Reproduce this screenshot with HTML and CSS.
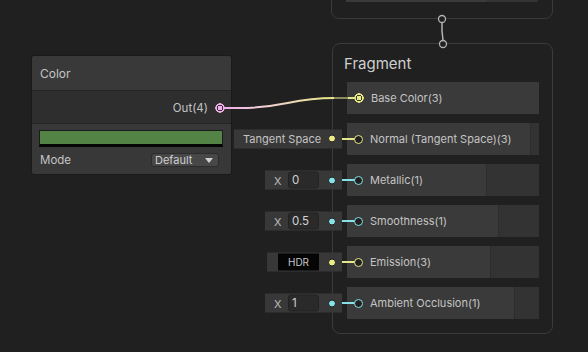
FILE: index.html
```html
<!DOCTYPE html>
<html>
<head>
<meta charset="utf-8">
<link rel="stylesheet" href="styles.css">
</head>
<body>
<div class="canvas">
  <div class="node node-top">
    <div class="top-bar"><div class="top-bar-main"></div><div class="top-bar-rest"></div></div>
  </div>

  <svg class="wires" width="588" height="352" viewBox="0 0 588 352">
    <defs>
      <linearGradient id="g1" gradientUnits="userSpaceOnUse" x1="226" y1="0" x2="330" y2="0">
        <stop offset="0" stop-color="#efaee6"/>
        <stop offset="0.35" stop-color="#f2cfd8"/>
        <stop offset="1" stop-color="#e6e68a"/>
      </linearGradient>
    </defs>
    <path d="M224 108 L240 108 C 285 108, 290 98, 334 98" fill="none" stroke="url(#g1)" stroke-width="2"/>
    <path d="M334 98 L348 98" stroke="#8a8a5e" stroke-width="2"/>
    <path d="M348 98 L356 98" stroke="#e6e68a" stroke-width="2"/>
    <circle cx="442" cy="19" r="3.5" fill="#202020" stroke="#b4b4b4" stroke-width="1.3"/>
    <path d="M442 22.5 L442 31 L443 40" fill="none" stroke="#b4b4b4" stroke-width="1.5"/>
    <circle cx="443" cy="44" r="3.5" fill="#202020" stroke="#b4b4b4" stroke-width="1.3"/>
  </svg>

  <div class="node node-color">
    <div class="color-header">Color</div>
    <div class="color-out">
      <span class="out-label">Out(4)</span>
      <span class="port-dot pink"></span>
    </div>
    <div class="color-body">
      <div class="swatch"></div>
      <div class="mode-row">
        <span class="mode-label">Mode</span>
        <div class="dropdown"><span>Default</span><span class="caret"></span></div>
      </div>
    </div>
  </div>

  <div class="node node-frag">
    <div class="frag-title">Fragment</div>
    <div class="slots">
      <div class="slot">
        <div class="slot-main" style="width:192px">
          <span class="port-dot yellow"></span>
          <span class="slot-label">Base Color(3)</span>
        </div>
      </div>

      <div class="slot">
        <div class="inbox inbox-text"><span>Tangent Space</span><span class="in-dot yellow"></span></div>
        <div class="wire wire-yellow"></div>
        <div class="slot-main" style="width:183px">
          <span class="port-ring yellow"></span>
          <span class="slot-label">Normal (Tangent Space)(3)</span>
        </div>
        <div class="slot-rest"></div>
      </div>

      <div class="slot">
        <div class="inbox inbox-x"><span class="x">X</span><span class="field">0</span><span class="in-dot cyan"></span></div>
        <div class="wire wire-cyan"></div>
        <div class="slot-main" style="width:139px">
          <span class="port-ring cyan"></span>
          <span class="slot-label">Metallic(1)</span>
        </div>
        <div class="slot-rest"></div>
      </div>

      <div class="slot">
        <div class="inbox inbox-x"><span class="x">X</span><span class="field">0.5</span><span class="in-dot cyan"></span></div>
        <div class="wire wire-cyan"></div>
        <div class="slot-main" style="width:151px">
          <span class="port-ring cyan"></span>
          <span class="slot-label">Smoothness(1)</span>
        </div>
        <div class="slot-rest"></div>
      </div>

      <div class="slot">
        <div class="inbox inbox-hdr"><span class="hdr">HDR</span><span class="in-dot yellow"></span></div>
        <div class="wire wire-yellow"></div>
        <div class="slot-main" style="width:143px">
          <span class="port-ring yellow"></span>
          <span class="slot-label">Emission(3)</span>
        </div>
        <div class="slot-rest"></div>
      </div>

      <div class="slot">
        <div class="inbox inbox-x"><span class="x">X</span><span class="field">1</span><span class="in-dot cyan"></span></div>
        <div class="wire wire-cyan"></div>
        <div class="slot-main" style="width:167px">
          <span class="port-ring cyan"></span>
          <span class="slot-label">Ambient Occlusion(1)</span>
        </div>
        <div class="slot-rest"></div>
      </div>
    </div>
  </div>
</div>
</body>
</html>
```

FILE: styles.css
```css
* { box-sizing: border-box; }
html, body { margin: 0; padding: 0; }
body {
  background: #202020;
  font-family: Inter, "Noto Sans", "Liberation Sans", sans-serif;
  color: #c4c4c4;
}
.canvas {
  position: relative;
  width: 588px;
  height: 352px;
  overflow: hidden;
}
.wires {
  position: absolute;
  left: 0;
  top: 0;
  z-index: 1;
  pointer-events: none;
}
.node { position: absolute; }

/* top (vertex) node */
.node-top {
  left: 331px;
  top: -20px;
  width: 222px;
  height: 39px;
  border: 1px solid #3a3a3a;
  border-radius: 8px;
  padding: 18px 14px 0 14px;
}
.top-bar { display: flex; height: 3px; }
.top-bar-main { width: 141px; background: #3a3a3a; }
.top-bar-rest { flex: 1; background: #333333; }

/* color node */
.node-color {
  left: 31px;
  top: 55px;
  width: 201px;
  height: 120px;
  border: 1px solid #1a1a1a;
  border-radius: 3px;
  overflow: hidden;
  display: flex;
  flex-direction: column;
  z-index: 0;
}
.color-header {
  height: 35px;
  background: #393939;
  font-size: 12px;
  line-height: 35px;
  padding-left: 8px;
  color: #c4c4c4;
  border-bottom: 1px solid #242424;
}
.color-out {
  height: 33px;
  background: #2e2e2e;
  display: flex;
  align-items: center;
  justify-content: flex-end;
  padding-right: 6px;
  padding-top: 1px;
  border-bottom: 1px solid #262626;
}
.out-label {
  font-size: 11.5px;
  color: #c4c4c4;
  margin-right: 7px;
}
.color-body {
  flex: 1;
  background: #383838;
  padding: 6px 8px 0 7px;
}
.swatch {
  height: 17px;
  background: #548445;
  border: 1px solid #1c1c1c;
  border-bottom: 3px solid #050505;
}
.mode-row {
  display: flex;
  align-items: center;
  justify-content: space-between;
  margin-top: 6px;
  padding-right: 4px;
}
.mode-label {
  font-size: 11.5px;
  color: #c4c4c4;
  padding-left: 1px;
}
.dropdown {
  width: 68px;
  height: 14px;
  background: #474747;
  border: 1px solid #2c2c2c;
  border-radius: 3px;
  display: flex;
  align-items: center;
  justify-content: space-between;
  padding: 0 5px 0 3px;
  font-size: 11px;
  color: #d0d0d0;
}
.caret {
  width: 0;
  height: 0;
  border-left: 4px solid transparent;
  border-right: 4px solid transparent;
  border-top: 5px solid #d0d0d0;
}

/* ports */
.port-dot, .port-ring, .in-dot {
  display: inline-block;
  flex: none;
  position: relative;
  z-index: 2;
}
.port-dot {
  width: 10px;
  height: 10px;
  border-radius: 50%;
}
.port-dot.pink {
  background: radial-gradient(circle, #f0b2ea 0 2.2px, #3a2a38 2.4px 3.1px, #f0b2ea 3.3px 4.6px, transparent 4.9px);
}
.port-dot.yellow {
  background: radial-gradient(circle, #ebeb8c 0 2.2px, #3a3a22 2.4px 3.1px, #ebeb8c 3.3px 4.6px, transparent 4.9px);
}
.port-ring {
  width: 9px;
  height: 9px;
  border-radius: 50%;
  background: #202020;
  border: 1.5px solid;
}
.port-ring.yellow { border-color: #e8e88c; }
.port-ring.cyan { border-color: #86e2e6; }

/* fragment node */
.node-frag {
  left: 332px;
  top: 43px;
  width: 221px;
  height: 291px;
  border: 1px solid #3b3b3b;
  border-radius: 8px;
  padding: 0 13px 0 14px;
  background: #202020;
  z-index: 0;
}
.frag-title {
  font-size: 15px;
  line-height: 20px;
  padding-top: 10px;
  padding-left: -2px;
  margin-left: -3px;
  margin-bottom: 8px;
  color: #cfcfcf;
}
.slots {
  display: flex;
  flex-direction: column;
  gap: 9px;
}
.slot {
  position: relative;
  height: 32px;
  width: 192px;
  display: flex;
}
.slot-main {
  background: #3a3a3a;
  display: flex;
  align-items: center;
  padding-left: 7px;
}
.slot-rest {
  flex: 1;
  background: #333333;
  border-left: 1px solid #2c2c2c;
}
.slot-label {
  font-size: 11px;
  color: #c4c4c4;
  margin-left: 7px;
}

/* input boxes left of the node */
.inbox {
  position: absolute;
  right: calc(100% + 5px);
  top: 50%;
  transform: translateY(-50%);
  height: 19px;
  background: #383838;
  display: flex;
  align-items: center;
  z-index: 2;
  font-size: 11px;
  color: #c4c4c4;
}
.inbox-text {
  width: 108px;
  padding-left: 9px;
  top: calc(50% - 0.5px);
}
.inbox-text span:first-child { flex: 1; }
.inbox-x { width: 77px; padding-left: 9px; }
.inbox-hdr { width: 75px; padding-left: 11px; }
.x { width: 14px; color: #bdbdbd; }
.field {
  width: 31px;
  height: 17px;
  background: #2a2a2a;
  border: 1px solid #222222;
  border-radius: 3px;
  padding-left: 3px;
  line-height: 15px;
  font-size: 11.5px;
  color: #d2d2d2;
}
.hdr {
  width: 41px;
  height: 17px;
  background: #050505;
  text-align: center;
  font-size: 10px;
  line-height: 17px;
  color: #c8c8c8;
}
.in-dot {
  position: absolute;
  right: 6px;
  top: 50%;
  width: 8px;
  height: 8px;
  margin-top: -4px;
  border-radius: 50%;
  border: 1px solid #1c1c1c;
}
.in-dot.yellow { background: #ebeb8a; }
.in-dot.cyan { background: #86e2e6; }

.wire {
  position: absolute;
  left: -12px;
  width: 22px;
  top: 15px;
  height: 2px;
  z-index: 1;
}
.wire-yellow { background: linear-gradient(to right, #5c5c48 0 7px, #e6e68a 7px); }
.wire-cyan { background: linear-gradient(to right, #4c5e60 0 7px, #86e2e6 7px); }
```
